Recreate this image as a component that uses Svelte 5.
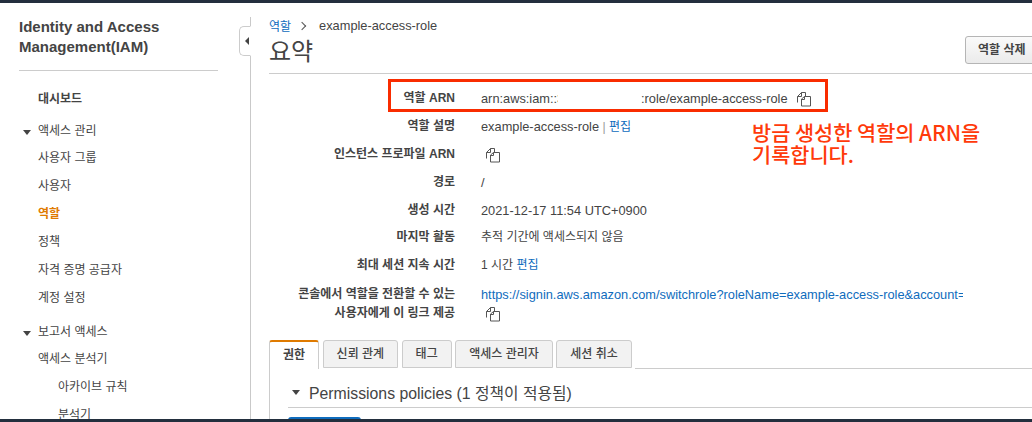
<script>
  const nav = [
    { label: '대시보드', cls: 'dash' },
    { label: '액세스 관리', cls: 'group' },
    { label: '사용자 그룹' },
    { label: '사용자' },
    { label: '역할', cls: 'active' },
    { label: '정책' },
    { label: '자격 증명 공급자' },
    { label: '계정 설정' },
    { label: '보고서 액세스', cls: 'group second' },
    { label: '액세스 분석기' },
    { label: '아카이브 규칙', cls: 'sub' },
    { label: '분석기', cls: 'sub' }
  ];
  const tabs = ['권한', '신뢰 관계', '태그', '액세스 관리자', '세션 취소'];
</script>

{#snippet copy()}
  <svg class="copy" width="16" height="16" viewBox="0 0 16 16" fill="#fff" stroke="#555" stroke-width="1">
    <path d="M1.5 11.5V5.5L5.5 1.5H9.5V5" />
    <path d="M5.5 1.5V5.5H1.5" fill="none" />
    <path d="M5.5 8L8.5 5.5H14.5V15H5.5Z" />
    <path d="M5.5 8.5H8.5V5.5" fill="none" />
  </svg>
{/snippet}

<div class="page">
  <div class="topbar"></div>
  <div class="body">
    <aside>
      <h2>Identity and Access<br />Management(IAM)</h2>
      <nav>
        {#each nav as item}
          <div class="item {item.cls ?? ''}">{item.label}</div>
        {/each}
      </nav>
      <button class="collapse" aria-label="collapse"></button>
    </aside>
    <main>
      <div class="crumb"><a href="#top">역할</a><span class="chev"></span><span class="latin">example-access-role</span></div>
      <div class="head">
        <h1>요약</h1>
        <button class="delete">역할 삭제</button>
      </div>
      <div class="summary">
        <div class="row first">
          <div class="key">역할 ARN</div>
          <div class="val arn latin"><span>arn:aws:iam::3</span><span class="gap"></span><span>:role/example-access-role</span>{@render copy()}</div>
        </div>
        <div class="row">
          <div class="key">역할 설명</div>
          <div class="val"><span class="latin">example-access-role</span> <span class="bar">|</span> <a href="#top">편집</a></div>
        </div>
        <div class="row">
          <div class="key">인스턴스 프로파일 ARN</div>
          <div class="val icon">{@render copy()}</div>
        </div>
        <div class="row">
          <div class="key">경로</div>
          <div class="val latin">/</div>
        </div>
        <div class="row">
          <div class="key">생성 시간</div>
          <div class="val latin">2021-12-17 11:54 UTC+0900</div>
        </div>
        <div class="row">
          <div class="key">마지막 활동</div>
          <div class="val">추적 기간에 액세스되지 않음</div>
        </div>
        <div class="row">
          <div class="key">최대 세션 지속 시간</div>
          <div class="val">1 시간 <a href="#top">편집</a></div>
        </div>
        <div class="row tall">
          <div class="key">콘솔에서 역할을 전환할 수 있는<br />사용자에게 이 링크 제공</div>
          <div class="val">
            <div class="link latin"><a href="#top">https://signin.aws.amazon.com/switchrole?roleName=example-access-role&amp;account=</a></div>
            <div class="icon2">{@render copy()}</div>
          </div>
        </div>
      </div>
      <div class="tabs">
        {#each tabs as tab, i}
          <div class="tab" class:on={i === 0}>{tab}</div>
        {/each}
        <div class="tabfill"></div>
      </div>
      <div class="panel">
        <div class="policy"><span class="tri"></span>Permissions policies (1 정책이 적용됨)</div>
        <div class="blue"></div>
      </div>
    </main>
  </div>
  <div class="bottombar"></div>
  <div class="redbox"></div>
  <div class="note">방금 생성한 역할의 ARN을<br />기록합니다.</div>
</div>

<style>
  :global(body) {
    margin: 0;
    background: #fff;
  }

  .page {
    position: relative;
    width: 1032px;
    height: 422px;
    display: flex;
    flex-direction: column;
    overflow: hidden;
    font-family: "Liberation Sans", "Noto Sans CJK KR", sans-serif;
    font-size: 12px;
    color: #444;
  }

  .latin {
    font-size: 12.8px;
  }

  .topbar {
    height: 3px;
    background: #232f3e;
    flex: none;
  }

  .bottombar {
    height: 3px;
    background: #232f3e;
    flex: none;
  }

  .body {
    flex: 1;
    min-height: 0;
    display: flex;
    overflow: hidden;
  }

  aside {
    position: relative;
    width: 251px;
    flex: none;
    box-sizing: border-box;
    border-right: 1px solid #c9c9c9;
    margin-top: 14px;
    padding: 0 32px 0 19px;
  }

  h2 {
    margin: 0;
    font-size: 15px;
    line-height: 20px;
    font-weight: 700;
    color: #444;
    padding-bottom: 13px;
    border-bottom: 1px solid #ccc;
  }

  nav {
    padding-top: 12px;
  }

  .item {
    height: 28px;
    line-height: 28px;
    padding-left: 19px;
    font-size: 12px;
    white-space: nowrap;
  }

  .dash {
    font-weight: 700;
    height: 32px;
    line-height: 32px;
  }

  .group {
    position: relative;
    height: 26px;
    line-height: 27px;
    margin-top: 3px;
  }

  .group.second {
    margin-top: 7px;
  }

  .group::before {
    content: '';
    position: absolute;
    left: 4px;
    top: 12px;
    border: 4px solid transparent;
    border-top: 5px solid #444;
    border-bottom: 0;
  }

  .active {
    color: #df7a00;
    font-weight: 700;
  }

  .sub {
    padding-left: 39px;
  }

  .collapse {
    position: absolute;
    right: -1px;
    top: 9px;
    width: 12px;
    height: 30px;
    padding: 0;
    box-sizing: border-box;
    background: #fff;
    border: 1px solid #ccc;
    border-right: 1px solid #fff;
    border-radius: 5px 0 0 5px;
  }

  .collapse::before {
    content: '';
    position: absolute;
    left: 5px;
    top: 10px;
    border: 4px solid transparent;
    border-right: 4px solid #444;
    border-left: 0;
  }

  main {
    flex: 1;
    min-width: 0;
    padding: 14px 0 0 18px;
  }

  a {
    color: #0f6cbd;
    text-decoration: none;
  }

  .crumb {
    display: flex;
    align-items: center;
    height: 17px;
    font-size: 12px;
  }

  .chev {
    width: 5px;
    height: 5px;
    margin: 0 14px 0 8px;
    border-top: 1px solid #555;
    border-right: 1px solid #555;
    transform: rotate(45deg);
  }

  .head {
    display: flex;
    justify-content: space-between;
    height: 39px;
    border-bottom: 1px solid #ccc;
    align-items: flex-start;
  }

  h1 {
    margin: 0;
    font-size: 24px;
    line-height: 36px;
    font-weight: 400;
    color: #444;
  }

  .delete {
    width: 72px;
    height: 28px;
    margin-top: 2px;
    margin-right: -5px;
    padding: 0 0 3px 12px;
    text-align: left;
    font: inherit;
    font-weight: 700;
    font-size: 12px;
    color: #444;
    background: linear-gradient(#fafafa, #ebebeb);
    border: 1px solid #b5b5b5;
    border-radius: 3px;
  }

  .summary {
    padding-top: 11px;
  }

  .row {
    display: flex;
    height: 27.9px;
    line-height: 27.9px;
    font-size: 12px;
  }

  .key {
    width: 186px;
    flex: none;
    text-align: right;
    font-weight: 700;
    font-size: 12px;
    color: #444;
  }

  .val {
    margin-left: 26px;
    flex: 1;
    min-width: 0;
  }

  .arn {
    display: flex;
    align-items: center;
  }

  .arn span:first-child {
    width: 77px;
    overflow: hidden;
    white-space: nowrap;
  }

  .gap {
    width: 83px;
  }

  .copy {
    display: block;
  }

  .arn .copy {
    margin-left: 8px;
  }

  .icon {
    padding-left: 4px;
    display: flex;
    align-items: center;
  }

  .bar {
    color: #999;
  }

  .tall {
    height: 47px;
    line-height: 19px;
    padding-top: 5px;
  }

  .link {
    width: 482px;
    overflow: hidden;
    white-space: nowrap;
  }

  .icon2 {
    padding-left: 4px;
    height: 19px;
    display: flex;
    align-items: center;
  }

  .tabs {
    display: flex;
    margin-top: 7.4px;
    height: 29px;
  }

  .tab {
    box-sizing: border-box;
    height: 28px;
    margin-right: 3.5px;
    padding: 0 13px;
    line-height: 26px;
    font-size: 12px;
    font-weight: 500;
    background: #f2f2f2;
    border: 1px solid #ccc;
    border-radius: 3px 3px 0 0;
  }

  .tab.on {
    height: 29px;
    background: #fff;
    border-top: 2px solid #df7a00;
    border-bottom: 0;
    font-weight: 700;
  }

  .tabfill {
    flex: 1;
    border-bottom: 1px solid #ccc;
  }

  .panel {
    margin-top: -1px;
    border-left: 1px solid #ccc;
    padding: 13px 0 0 18px;
  }

  .policy {
    display: flex;
    align-items: center;
    font-size: 15.8px;
    height: 27px;
    border-bottom: 1px solid #ccc;
    padding-bottom: 3px;
    box-sizing: border-box;
  }

  .tri {
    width: 0;
    height: 0;
    margin: 0 9px 0 4px;
    border: 4px solid transparent;
    border-top: 5px solid #444;
    border-bottom: 0;
  }

  .blue {
    width: 73px;
    height: 10px;
    margin-top: 9px;
    background: #0f6cbd;
    border-radius: 3px 3px 0 0;
  }

  .redbox {
    position: absolute;
    left: 388px;
    top: 79px;
    width: 440px;
    height: 33px;
    box-sizing: border-box;
    border: 3px solid #f92c00;
  }

  .note {
    position: absolute;
    left: 752px;
    top: 122px;
    font-family: "Noto Sans CJK KR", sans-serif;
    font-size: 20.8px;
    font-weight: 500;
    line-height: 21.5px;
    color: #ff3a0a;
    white-space: nowrap;
  }
</style>
